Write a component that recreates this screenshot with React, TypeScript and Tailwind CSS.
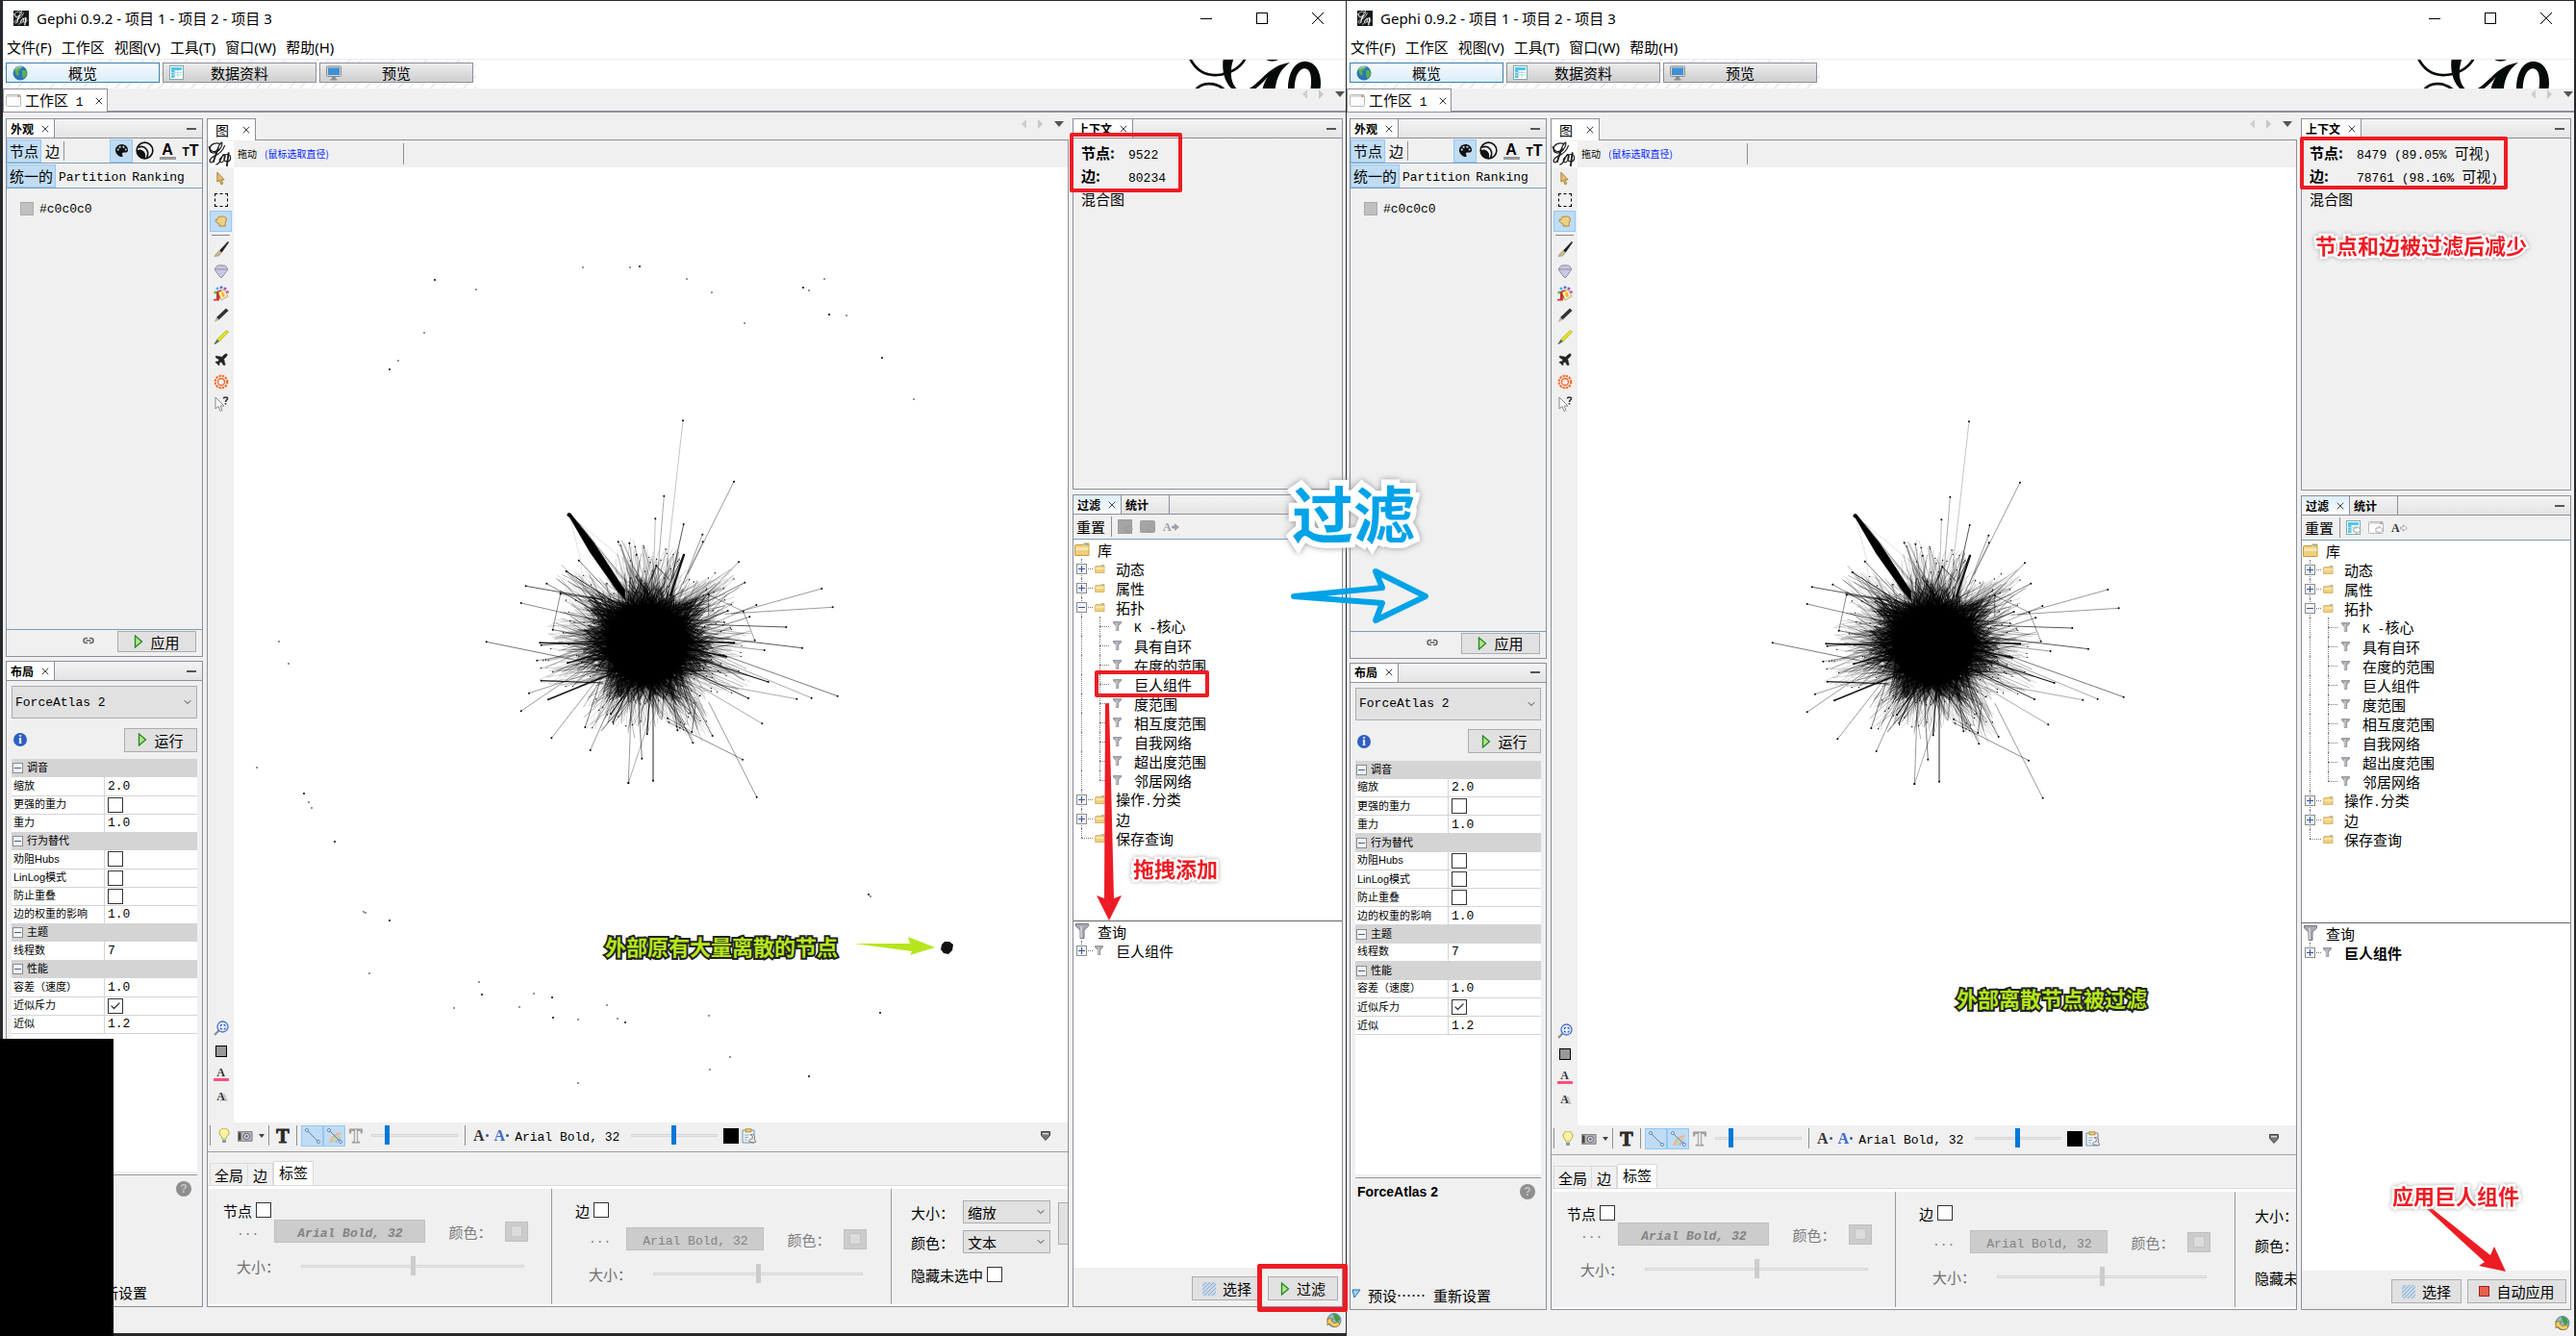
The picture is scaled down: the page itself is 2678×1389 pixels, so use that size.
import React from "react";
import { Check, ChevronDown, Link2, Palette, Plane, Gem, X } from "lucide-react";

const LINE = "border-[#8c8f9a]";

/* ---------- small drawings ---------- */

function GephiMark({ dark = false, className }: { dark?: boolean; className: string }) {
  const ink = dark ? "#ffffff" : "#1c1c1c";
  return (
    <svg viewBox="0 0 26 26" className={className} fill="none" stroke={ink} aria-hidden="true">
      <rect width="26" height="26" fill={dark ? "#15181b" : "#ffffff"} stroke="none" />
      <path d="M13 3C8 0 2 3 2 8c0 4 5 5 9 1 3-3 4-7 3-8-2 0-5 8-6 13-1 4-3 8-5 7-2-1-1-4 3-6 5-2 9-5 11-11" strokeWidth="1.200" />
      <path d="M1 5c1 5 6 7 9 3M8 23c4 1 5-6 7-9 2-2 3 0 2 3-1 4-4 5-5 3s3-7 7-7c5 0 5 7 0 7-4 0-3-4-1-7" strokeWidth="1.200" />
      <path d="M21 11c-1 5-1 9-2 14" strokeWidth="1.800" />
      <path d="M12 7C9 10 6 16 6 21" strokeWidth="1.500" />
    </svg>
  );
}

function BannerLogo() {
  return (
    <svg viewBox="550 186 420 90" className="mr-6 h-[30px] w-[140px]" fill="none" stroke="#050a0a" aria-hidden="true">
      <path d="M557 184C575 218 605 236 640 234C680 232 712 212 728 184" strokeWidth="8" />
      <path d="M660 184C654 225 668 262 690 280L706 280C684 262 678 225 692 184Z" fill="#050a0a" stroke="none" />
      <path d="M574 280C592 258 632 252 664 280" strokeWidth="8" />
      <path d="M790 184Q812 198 836 184Z" fill="#050a0a" stroke="none" />
      <path d="M734 280C780 258 800 204 868 195C840 215 826 240 822 280L782 280C786 262 792 250 798 240C785 256 770 270 756 280Z" fill="#050a0a" stroke="none" />
      <path d="M862 280C862 232 878 193 916 191C954 193 970 236 962 280L932 280C938 240 932 214 914 214C896 214 882 240 882 280Z" fill="#050a0a" stroke="none" />
    </svg>
  );
}

function Globe() {
  return (
    <svg viewBox="0 0 16 16" className="h-4 w-4" aria-hidden="true">
      <circle cx="8" cy="8" r="7.5" fill="#2c74b8" />
      <path d="M2 4c2-2 4-3 6-3l1 3-3 2 1 3-2 2-2-3zM10 5l4 0 1 4-3 5-2-3z" fill="#5bb04f" />
      <path d="M3 4a6 6 0 0 1 7-2" stroke="#bfe3f7" fill="none" />
    </svg>
  );
}

function SheetIcon({ gray = false, arrow = false }: { gray?: boolean; arrow?: boolean }) {
  return (
    <svg viewBox="0 0 16 16" className="h-4 w-4" aria-hidden="true">
      <rect x=".5" y=".5" width="14" height="14" fill={gray ? "#a5a5a5" : "#ffffff"} stroke={gray ? "#9a9a9a" : "#7ea9a9"} />
      {!gray && <path d="M2 2h11v3H2zM2 2h3v11H2z" fill="#4cc6ee" />}
      {!gray && <path d="M2 7.500h11M2 10h11M5.500 5v8M9 5v8" stroke="#b9d9e4" />}
      {arrow && <path d="M8 8h3V6l4.500 4-4.500 4v-2H8z" fill={gray ? "#a5a5a5" : "#fff"} stroke="#8b9a8b" strokeWidth=".8" />}
    </svg>
  );
}

function FrameIcon({ gray = false, arrow = false }: { gray?: boolean; arrow?: boolean }) {
  return (
    <svg viewBox="0 0 16 16" className="h-4 w-4" aria-hidden="true">
      <rect x=".5" y="1.500" width="15" height="12" rx="1" fill={gray ? "#a5a5a5" : "#fdfdfd"} stroke={gray ? "#9e9e9e" : "#b9b9b9"} />
      {!gray && <path d="M1 2h14v2H1z" fill="#dcdcdc" />}
      {!gray && <circle cx="13.500" cy="3" r="1" fill="#d9604c" />}
      {arrow && <path d="M8 8h3V6l4.500 4-4.500 4v-2H8z" fill={gray ? "#a5a5a5" : "#fff"} stroke="#999" strokeWidth=".8" />}
    </svg>
  );
}

function MonitorIcon() {
  return (
    <svg viewBox="0 0 16 16" className="h-4 w-4" aria-hidden="true">
      <rect x=".5" y="1" width="15" height="10.500" rx="1" fill="#d5d5d5" stroke="#8d8d8d" />
      <rect x="2" y="2.500" width="12" height="7.500" fill="#3a92d8" />
      <path d="M6 12h4v2H6zM4.500 14h7v1.500h-7z" fill="#8d8d8d" />
    </svg>
  );
}

function PlayIcon() {
  return (
    <svg viewBox="0 0 10 14" className="h-[14px] w-[10px]" aria-hidden="true">
      <path d="M1.500 1l7 6-7 6z" fill="#b6e28a" stroke="#1f8a1f" strokeWidth="1.300" />
    </svg>
  );
}

function Folder({ big = false }: { big?: boolean }) {
  return (
    <svg viewBox="0 0 16 14" className={big ? "h-[14px] w-4" : "h-[9px] w-[11px]"} aria-hidden="true">
      <path d="M1 2.500L9 2.500 10 1h5v12.500H.5V3z" fill="#f0cf80" stroke="#c79b3b" />
      <path d="M1.500 5h13v3h-13z" fill="#fae6ae" />
      <path d="M11 1.800h3" stroke="#4fb7d8" strokeWidth="1.500" />
    </svg>
  );
}

function Funnel({ big = false }: { big?: boolean }) {
  return (
    <svg viewBox="0 0 14 16" className={big ? "h-4 w-[14px]" : "h-[10px] w-[9px]"} aria-hidden="true">
      <path d="M.5.5h13v2.500l-4.500 4v8.500h-4V7l-4.500-4z" fill="#a9a9b2" stroke="#77777f" />
      <path d="M6 3v12" stroke="#e4e4ec" strokeWidth="1.200" />
    </svg>
  );
}

function SerifA({ color, drop = false }: { color: string; drop?: boolean }) {
  return (
    <span className="flex items-center font-['Liberation_Serif'] text-base font-bold leading-none" style={{ color }}>
      A{drop && <span className="ml-px h-[3px] w-[3px] rounded-full bg-[#3c5a85]" />}
    </span>
  );
}

function HatchSwatch() {
  return (
    <svg viewBox="0 0 14 14" className="h-[14px] w-[14px]" aria-hidden="true">
      <rect width="14" height="14" fill="#c7d8e8" />
      <path d="M0 4l4-4M0 8l8-8M0 12l12-12M2 14L14 2M6 14l8-8M10 14l4-4" stroke="#8fb0d0" />
    </svg>
  );
}

function StatusGlobe() {
  return (
    <svg viewBox="0 0 16 16" className="h-4 w-4" aria-hidden="true">
      <circle cx="8" cy="7.500" r="7" fill="#8fb9c9" stroke="#47707f" strokeWidth=".8" />
      <path d="M7 1c4 0 6 2 7 6l-3 3-3-4z" fill="#3f9c46" />
      <path d="M1 6l6 0-2 2c2 3 5 3 7 1l2 3c-4 4-8 3-11-1l-2 2z" fill="#f1cf67" stroke="#8a641a" strokeWidth=".8" />
    </svg>
  );
}

/* ---------- shared controls ---------- */

function CheckBox({ label, checked = false, disabled = false }: { label: string; checked?: boolean; disabled?: boolean }) {
  return (
    <span className="relative inline-block h-4 w-4 shrink-0">
      <input type="checkbox" aria-label={label} defaultChecked={checked} disabled={disabled} className="peer block h-4 w-4 appearance-none border border-[#333] bg-white" />
      <Check className="pointer-events-none absolute left-0.5 top-0.5 hidden h-3 w-3 text-[#333] peer-checked:block" strokeWidth={2.500} />
    </span>
  );
}

function Slider({ label, value, className, disabled = false }: { label: string; value: number; className: string; disabled?: boolean }) {
  return (
    <input
      type="range"
      aria-label={label}
      defaultValue={value}
      disabled={disabled}
      className={`h-5 shrink-0 appearance-none bg-transparent [&::-webkit-slider-runnable-track]:h-[3px] [&::-webkit-slider-runnable-track]:border [&::-webkit-slider-runnable-track]:border-[#d6d6d6] [&::-webkit-slider-runnable-track]:bg-[#e7eaea] [&::-webkit-slider-thumb]:-mt-[10px] [&::-webkit-slider-thumb]:h-5 [&::-webkit-slider-thumb]:w-[5px] [&::-webkit-slider-thumb]:appearance-none [&::-webkit-slider-thumb]:bg-[#0078d7] disabled:[&::-webkit-slider-thumb]:bg-[#cccccc] ${className}`}
    />
  );
}

function Push({ children, className }: { children: React.ReactNode; className: string }) {
  return <button className={`flex items-center justify-center gap-[7px] border border-[#adadad] bg-[#e1e1e1] leading-none ${className}`}>{children}</button>;
}

function DropDown({ label, value, className }: { label: string; value: string; className: string }) {
  return (
    <span className="relative block">
      <select aria-label={label} defaultValue={value} className={`block appearance-none rounded-none border border-[#adadad] bg-[#e1e1e1] py-0 leading-none ${className}`}>
        <option>{value}</option>
      </select>
      <ChevronDown className="pointer-events-none absolute right-1 top-1/2 h-3 w-3 -translate-y-1/2 text-[#444]" />
    </span>
  );
}

const Rule = ({ className = "h-[21px]" }: { className?: string }) => <span className={`w-px shrink-0 bg-[#8f8f8f] ${className}`} />;

const Mono = ({ children, className = "" }: { children: React.ReactNode; className?: string }) => (
  <span className={`whitespace-pre font-['Liberation_Mono'] text-[13px] leading-none ${className}`}>{children}</span>
);

function ScrollArrows({ className }: { className: string }) {
  return (
    <svg viewBox="0 0 46 12" className={`h-3 w-[46px] ${className}`} aria-hidden="true">
      <path d="M6 1v10L1 6z" fill="#cfcfcf" />
      <path d="M18 1v10l5-5z" fill="#c8c8c8" />
      <path d="M35 3h10l-5 6z" fill="#555" />
    </svg>
  );
}

function PanelHead({ title, active = false, extra }: { title: string; active?: boolean; extra?: string }) {
  return (
    <div className={`flex h-5 shrink-0 items-stretch border-b bg-gradient-to-b from-[#f3f3f3] to-[#e4e4e4] text-xs font-bold leading-none ${LINE}`}>
      <div className={`flex items-center gap-1.5 border-r pl-1 pr-[3px] ${LINE} ${active ? "bg-gradient-to-b from-[#dcecf9] to-white" : "bg-white"}`}>
        {title}
        <button aria-label={`关闭 ${title}`}><X className="h-3 w-3 text-[#444]" /></button>
      </div>
      {extra && <div className={`flex w-[50px] items-center border-r pl-1 ${LINE}`}>{extra}</div>}
      <button aria-label={`最小化 ${title}`} className="ml-auto mr-1.5 flex items-center"><span className="h-0.5 w-[10px] bg-[#555]" /></button>
    </div>
  );
}

/* ---------- left side ---------- */

function Appearance() {
  return (
    <section className={`flex min-h-0 flex-[560_1_0%] flex-col border ${LINE}`}>
      <PanelHead title="外观" />
      <div className="flex h-[26px] shrink-0 items-center border-b border-[#7f9db9]">
        <button className="h-6 w-9 border border-[#90c8f6] bg-[#c0dcf3] leading-none">节点</button>
        <button className="ml-1 leading-none">边</button>
        <Rule className="ml-1 h-5" />
        <div className="ml-auto flex items-center">
          <button aria-label="颜色" className="flex h-6 w-6 items-center justify-center border border-[#90c8f6] bg-[#c0dcf3]">
            <svg viewBox="0 0 16 16" className="h-[15px] w-[15px]" aria-hidden="true">
              <path d="M8 1a7 6.500 0 0 0-7 6.500c0 4 4 7.500 7 7.500 2 0 1-2 .5-3s.5-2 2-2H13c1.500 0 2-1.500 2-2.500C15 4 12 1 8 1z" fill="#111" />
              <g fill="#c0dcf3"><circle cx="4" cy="7" r="1.200" /><circle cx="6" cy="4" r="1.200" /><circle cx="10" cy="4" r="1.200" /><circle cx="12.500" cy="7" r="1.100" /></g>
            </svg>
          </button>
          <button aria-label="大小" className="flex h-6 w-6 items-center justify-center">
            <svg viewBox="0 0 20 20" className="h-[19px] w-[19px]" fill="none" stroke="#111" strokeWidth="1.700"><circle cx="10" cy="10" r="8.800" /><path d="M3 6.500c7-3 13 4 9 11.500" /><path d="M2 10.500c5-2 9 2 7.500 7.500C6 18 2.500 15 2 10.500z" fill="#111" /></svg>
          </button>
          <button aria-label="标签颜色" className="flex h-6 w-6 flex-col items-center justify-center font-['Liberation_Sans'] text-base font-bold leading-[15px]">A<span className="h-[3px] w-[17px] bg-[#999]" /></button>
          <button aria-label="标签大小" className="flex h-6 w-6 items-baseline justify-center font-['Liberation_Sans'] text-xs font-bold leading-6">T<span className="text-base leading-6">T</span></button>
        </div>
      </div>
      <div className="flex h-[26px] shrink-0 items-center border-b border-[#7f9db9]">
        <button className="h-6 w-[51px] border border-[#90c8f6] bg-[#c0dcf3] leading-none">统一的</button>
        <button className="ml-[3px] leading-none"><Mono>Partition</Mono></button>
        <button className="ml-1.5 leading-none"><Mono>Ranking</Mono></button>
      </div>
      <div className="flex items-center gap-1.5 px-3.5 py-3.5"><span className="h-3.5 w-3.5 border border-[#aaa] bg-[#c0c0c0]" /><Mono>#c0c0c0</Mono></div>
      <div className="mt-auto flex h-7 items-start justify-end gap-6 border-t border-[#7f9db9] pr-1.5 pt-px">
        <Link2 className="mt-1 h-3 w-3 text-[#666]" strokeWidth={3} />
        <Push className="h-[22px] w-[82px]"><PlayIcon />应用</Push>
      </div>
    </section>
  );
}

type Prop = { head?: string; name?: string; value?: string; check?: boolean };
const PROPS: Prop[] = [
  { head: "调音" }, { name: "缩放", value: "2.0" }, { name: "更强的重力", check: false }, { name: "重力", value: "1.0" },
  { head: "行为替代" }, { name: "劝阻Hubs", check: false }, { name: "LinLog模式", check: false }, { name: "防止重叠", check: false }, { name: "边的权重的影响", value: "1.0" },
  { head: "主题" }, { name: "线程数", value: "7" },
  { head: "性能" }, { name: "容差（速度）", value: "1.0" }, { name: "近似斥力", check: true }, { name: "近似", value: "1.2" },
];

function LayoutPanel() {
  return (
    <section className={`flex min-h-0 flex-[672_1_0%] flex-col border ${LINE}`}>
      <PanelHead title="布局" />
      <div className="flex min-h-0 flex-1 flex-col px-[5px] pt-[5px]">
        <DropDown label="布局算法" value="ForceAtlas 2" className="h-[34px] w-full pl-[3px] font-['Liberation_Mono'] text-[13px]" />
        <div className="flex h-[42px] shrink-0 items-center justify-between pl-0.5 pt-0.5">
          <button aria-label="信息" className="h-[14px] w-[14px] rounded-full bg-[#2f5fc0] font-['Liberation_Serif'] text-xs font-bold leading-[14px] text-white">i</button>
          <Push className="h-[25px] w-[76px]"><PlayIcon />运行</Push>
        </div>
        <div className="min-h-0 flex-1 bg-white">
          <table className="w-full table-fixed border-collapse font-['Liberation_Sans','Noto_Sans_CJK_SC',sans-serif] text-[11px] leading-none">
            <tbody>
              {PROPS.map((p) =>
                p.head ? (
                  <tr key={p.head} className="h-[19px] bg-[#d4d4d4]">
                    <th colSpan={2} className="p-0 text-left font-normal">
                      <span className="flex items-center gap-1 pl-px">
                        <span className="flex h-[11px] w-[11px] items-center justify-center border border-[#8c8c8c] bg-[#f5f5f5]"><span className="h-px w-[7px] bg-[#3a5fa0]" /></span>
                        {p.head}
                      </span>
                    </th>
                  </tr>
                ) : (
                  <tr key={p.name} className="h-[19px] border-b border-[#d4d4d4]">
                    <td className="whitespace-nowrap border-r border-[#d4d4d4] p-0 pl-0.5">{p.name}</td>
                    <td className="p-0 pl-[3px] align-middle">
                      {p.value ? <Mono className="block">{p.value}</Mono> : <span className="flex"><CheckBox label={p.name ?? ""} checked={p.check} /></span>}
                    </td>
                  </tr>
                )
              )}
            </tbody>
          </table>
        </div>
        <div className="mt-[3px] flex h-[137px] shrink-0 flex-col justify-between border-t border-[#999] pb-1.5 pt-1.5">
          <div className="flex items-start justify-between pl-0.5 pr-1.5">
            <span className="font-['Liberation_Sans'] text-sm font-bold leading-4">ForceAtlas 2</span>
            <button aria-label="帮助" className="h-4 w-4 rounded-full bg-[#8e8e8e] font-['Liberation_Sans'] text-xs font-bold leading-4 text-[#c4c4c4]">?</button>
          </div>
          <div className="-ml-1 flex items-center leading-4">
            <svg viewBox="0 0 10 10" className="mb-1 h-2.5 w-2.5" aria-hidden="true"><path d="M1 1h8L3 9z" fill="#9fd3f3" stroke="#1f6fb2" /></svg>
            <button className="ml-[7px] whitespace-nowrap">预设……</button>
            <button className="ml-2 whitespace-nowrap">重新设置</button>
          </div>
        </div>
      </div>
    </section>
  );
}

/* ---------- graph ---------- */

const SPOKES: [number, number, number, number, number][] = [
  [690, 52, 640, 500, 0.35], [849, 242, 705, 530, 0.6], [631, 287, 612, 520, 0.5], [604, 358, 598, 540, 0.4], [692, 375, 655, 545, 1],
  [751, 407, 690, 560, 0.6], [752, 430, 680, 580, 0.5], [488, 430, 545, 560, 0.6], [523, 434, 540, 560, 0.5], [545, 470, 560, 600, 0.4],
  [864, 493, 700, 660, 0.6], [883, 557, 720, 640, 0.8], [1123, 576, 840, 655, 0.6], [1157, 634, 820, 655, 0.6], [919, 627, 700, 720, 0.5],
  [1012, 696, 760, 688, 1], [1062, 761, 760, 725, 1], [944, 768, 700, 740, 0.6], [1172, 911, 780, 770, 0.8], [1091, 917, 760, 780, 0.5],
  [956, 867, 720, 790, 1.6], [1045, 920, 770, 870, 0.5], [894, 918, 690, 820, 1.2], [937, 997, 740, 880, 0.5], [876, 1109, 640, 990, 0.7],
  [920, 1226, 770, 930, 0.6], [782, 1035, 700, 880, 0.8], [721, 1057, 640, 900, 0.7], [597, 1175, 597, 860, 1.3], [562, 1106, 548, 880, 0.8],
  [520, 1182, 530, 900, 0.6], [520, 1182, 580, 1000, 0.5], [578, 1030, 590, 860, 1.6], [401, 1080, 490, 880, 0.6], [472, 992, 540, 850, 1.4],
  [385, 1008, 430, 870, 0.8], [280, 1042, 430, 850, 0.6], [185, 958, 430, 790, 0.6], [270, 922, 470, 840, 2.2], [210, 902, 430, 830, 0.6],
  [248, 863, 440, 870, 1.6], [235, 800, 430, 770, 0.5], [77, 742, 420, 812, 0.8], [244, 745, 430, 750, 2], [248, 752, 420, 740, 1],
  [185, 621, 440, 680, 0.7], [200, 568, 440, 610, 1], [265, 560, 440, 660, 0.7], [326, 522, 480, 620, 1.2], [365, 488, 490, 620, 0.8],
  [308, 592, 284, 704, 0.7], [284, 704, 420, 730, 0.8], [308, 592, 440, 610, 0.8], [770, 595, 878, 647, 0.6], [878, 647, 914, 737, 0.6],
  [770, 595, 770, 660, 0.6], [914, 737, 780, 760, 0.4], [330, 808, 460, 770, 2], [465, 967, 540, 860, 1.6], [718, 1023, 730, 930, 0.8],
  [642, 980, 718, 1023, 0.6], [693, 470, 650, 600, 3.2], [693, 470, 630, 600, 1], [607, 505, 560, 620, 1], [607, 505, 650, 550, 1],
  [850, 745, 700, 740, 2.4], [825, 788, 690, 760, 2.6], [830, 645, 700, 700, 1.2], [898, 664, 720, 720, 0.7], [673, 1018, 650, 850, 0.9],
];

function makeFuzz() {
  let seed = 9522;
  const rnd = () => {
    seed = (seed * 1664525 + 1013904223) % 4294967296;
    return seed / 4294967296;
  };
  const CX = 578;
  const CY = 746;
  const ray = (minR: number, spread: number, pow: number, swing: number, inBase: number) => {
    const a = rnd() * Math.PI * 2;
    const bias = 0.84 + 0.09 * Math.sin(a * 7) + 0.09 * Math.cos(a * 11 + 1);
    const r = (minR + spread * Math.pow(rnd(), pow)) * bias;
    const b = a + (rnd() - 0.5) * swing;
    const inner = inBase + rnd() * 50;
    const x = Math.round(CX + Math.cos(a) * r * 1.06);
    const y = Math.round(CY + Math.sin(a) * r * 0.98);
    return { x, y, seg: `M${x} ${y}L${Math.round(CX + Math.cos(b) * inner)} ${Math.round(CY + Math.sin(b) * inner)}` };
  };
  let light = "";
  let dense = "";
  let halo = "";
  let nodes = "";
  for (let i = 0; i < 1700; i++) {
    const k = ray(170, 190, 1.5, 1.3, 80);
    if (i % 3 === 0) dense += k.seg;
    else light += k.seg;
    if (i % 7 === 0) nodes += `M${k.x} ${k.y}h.1`;
  }
  for (let i = 0; i < 1300; i++) halo += ray(140, 95, 1.4, 1.6, 70).seg;
  return { light, dense, halo, nodes };
}
const FUZZ = makeFuzz();

const OUTLIERS: [number, number][] = [
  [452, 291], [441, 346], [414, 375], [405, 384], [290, 667], [267, 798], [316, 825], [321, 834], [324, 840], [348, 875], [378, 948], [380, 949],
  [405, 957], [384, 1012], [498, 1021], [501, 1034], [472, 1048], [555, 1033], [574, 1037], [540, 1047], [631, 1045], [575, 1058], [601, 1060],
  [642, 1059], [650, 1063], [601, 1126], [737, 1056], [915, 1053], [759, 1099], [738, 1112], [841, 1119], [606, 278], [655, 278], [665, 277], [714, 290],
  [740, 304], [835, 299], [841, 302], [857, 290], [862, 327], [880, 328], [774, 336], [917, 372], [950, 415], [495, 301], [903, 930], [905, 932], [300, 690],
];

function Graph({ outliers }: { outliers: boolean }) {
  return (
    <svg viewBox="243 176 867 990" className="h-[990px] w-[867px] shrink-0" role="img" aria-label="网络图">
      <g transform="translate(480 420) scale(.33333)" fill="none" stroke="#000">
        <path d={FUZZ.light} strokeWidth="1.200" opacity=".4" />
        <path d={FUZZ.dense} strokeWidth="1.800" opacity=".5" />
        <path d={FUZZ.halo} strokeWidth="2" opacity=".75" />
        <path d={FUZZ.nodes} strokeWidth="4" strokeLinecap="round" />
        {SPOKES.map(([x1, y1, x2, y2, w], i) => (
          <path key={i} d={`M${x1} ${y1}L${x2} ${y2}`} strokeWidth={w < 1 ? 2 : w * 2.2} opacity={w < 1 ? w : 0.9} />
        ))}
        {SPOKES.map(([x, y], i) => <circle key={i} cx={x} cy={y} r="3" fill="#000" stroke="none" />)}
        <path d="M332 345L400 462 480 575 510 610 508 580 410 430 340 343Z" fill="#000" stroke="#000" strokeWidth="2" />
        <path d="M335 345L500 545M335 345L470 520M335 345L520 560M365 370L540 590" strokeWidth="2" opacity=".45" />
        <path d="M335 345L370 480 380 575M335 345L545 520" strokeWidth="1.500" opacity=".25" />
        <circle cx="335" cy="346" r="6" fill="#000" />
        <ellipse cx="578" cy="746" rx="126" ry="124" fill="#000" />
      </g>
      {outliers && (
        <g fill="#111">
          {OUTLIERS.map(([x, y], i) => <circle key={i} cx={x} cy={y} r={i % 3 ? 0.8 : 1.1} />)}
          <path d="M979 982l3-3 5 0 4 3-1 6-4 4-5-1-3-4z" />
          <path d="M888 981L946 981 944 974 972 985 946 993 948 989Z" fill="#b5e61d" />
        </g>
      )}
    </svg>
  );
}

/* ---------- centre ---------- */

const TOOLS: [string, React.ReactNode][] = [
  ["画笔", <svg viewBox="0 0 16 16" className="h-4 w-4"><path d="M15 .5L6.500 9.500 8.500 11 15.500 1z" fill="#222" stroke="#222" /><path d="M6 9.500l2.500 2-3 3.500-4.500.5 2-3z" fill="#c9b98c" stroke="#8d8362" strokeWidth=".6" /></svg>],
  ["调整大小", <Gem className="h-4 w-4" fill="#c9c9e2" stroke="#8c8ca4" strokeWidth={1.500} />],
  ["填充", <svg viewBox="0 0 16 16" className="h-4 w-4"><circle cx="4" cy="3" r="1.500" fill="#3fb8d8" /><circle cx="8" cy="1.800" r="1.500" fill="#5b6ee0" /><circle cx="12" cy="3" r="1.500" fill="#a052d0" /><circle cx="14.500" cy="6.500" r="1.500" fill="#d05aa0" /><circle cx="1.800" cy="7" r="1.500" fill="#57c04f" /><path d="M3 6l5-2 1 8-6 3z" fill="#c9352b" /><path d="M5 7l6-3 4 7-7 4z" fill="#fff3d0" stroke="#a0864a" strokeWidth=".7" /><path d="M10 6l2 5-3 1-1-5z" fill="#f2b51c" /><path d="M0 14h6v1.500H0z" fill="#d52b2b" /></svg>],
  ["铅笔", <svg viewBox="0 0 16 16" className="h-4 w-4"><path d="M13 .5l2.500 2.500L5.500 12.500 3 10z" fill="#333" /><path d="M3 10l2.500 2.500L.8 15z" fill="#c9ab83" /></svg>],
  ["荧光笔", <svg viewBox="0 0 16 16" className="h-4 w-4"><path d="M13.500.5L15.500 2 6 12l-2.500-2z" fill="#e9e51c" stroke="#a5a014" strokeWidth=".7" /><path d="M3.500 10L6 12l-4.500 3-1-.5z" fill="#566" /></svg>],
  ["最短路径", <Plane className="h-4 w-4" fill="#222" stroke="#222" strokeWidth={1} />],
  ["热图", <svg viewBox="0 0 16 16" className="h-4 w-4" fill="none" stroke="#f5701f"><circle cx="8" cy="8" r="6.300" strokeWidth="2.200" strokeDasharray="2.300 1" /><circle cx="8" cy="8" r="3.500" strokeWidth="1.300" stroke="#f2603a" /></svg>],
  ["编辑", <svg viewBox="0 0 16 16" className="h-4 w-4"><path d="M2 1v12l3-2.500 2 5 2-1-2-4.500h4z" fill="#fff" stroke="#888" /><path d="M10.500 2.500c0-2 4-2 4 0 0 1.500-2 1.500-2 3.500M12.500 7v1.500" stroke="#333" strokeWidth="1.600" fill="none" /></svg>],
];

function ToolColumn() {
  return (
    <div className="flex w-[27px] shrink-0 flex-col items-center">
      <button aria-label="选择" className="flex h-[23px] w-[23px] items-center justify-center"><svg viewBox="0 0 10 16" className="h-[15px] w-[9px]"><path d="M1 1v11l2.500-2L5.500 15l2-1L5.500 9.500H9z" fill="#e6c46e" stroke="#8f6c1d" strokeWidth=".9" /></svg></button>
      <button aria-label="矩形选择" className="flex h-[22px] w-[23px] items-center justify-center"><span className="h-[14px] w-[14px] border border-dashed border-black" /></button>
      <button aria-label="拖动" className="flex h-[22px] w-[23px] items-center justify-center border border-[#90c8f6] bg-[#c0dcf3]"><svg viewBox="0 0 14 13" className="h-3 w-[14px]"><path d="M3 3q1-3 2.500-1Q7 0 8.500 1.500 10 0 11 2q2 0 2 2.500L11.500 9v3H5V10L.8 7V4.500L2.500 5z" fill="#eed083" stroke="#a17a26" strokeWidth=".9" /></svg></button>
      <span className="mb-0.5 mt-[3px] h-px w-[19px] bg-[#888]" />
      {TOOLS.map(([name, icon]) => <button key={name} aria-label={name} className="flex h-[23px] w-[23px] items-center justify-center">{icon}</button>)}
      <div className="mt-auto flex flex-col items-center pb-4">
        <button aria-label="居中" className="flex h-6 w-[23px] items-center justify-center"><svg viewBox="0 0 16 16" className="h-4 w-4" fill="none"><path d="M6 10L1 15" stroke="#888" strokeWidth="2" /><circle cx="9.500" cy="6.500" r="5.500" fill="#e6efff" stroke="#4a6fd0" strokeWidth="1.300" /><path d="M7.500 6V4.500H9M10.500 4.500H12V6M12 7.500V9h-1.500M9 9H7.500V7.500" stroke="#2547b5" /></svg></button>
        <button aria-label="重置颜色" className="flex h-6 w-[23px] items-center justify-center"><span className="h-3 w-3 border border-black bg-[#999]" /></button>
        <button aria-label="重置标签颜色" className="flex h-6 w-[23px] flex-col items-center justify-center font-['Liberation_Serif'] text-xs font-bold leading-[11px] text-[#333]">A<span className="h-[3px] w-4 bg-[#ff4f7d]" /></button>
        <button aria-label="重置标签大小" className="flex h-[22px] w-[23px] items-center justify-center font-['Liberation_Serif'] text-xs font-bold leading-none text-[#333] [text-shadow:3px_1px_0_#c4c4c4]">A</button>
      </div>
    </div>
  );
}

function LightEdge({ rainbow = false }: { rainbow?: boolean }) {
  return (
    <svg viewBox="0 0 16 16" className="h-4 w-4" fill="none">
      {rainbow && <path d="M3 15C5 9 9 6 14 5" stroke="#f0b090" strokeWidth="2" />}
      {rainbow && <path d="M6 15c1-4 4-6 8-7" stroke="#b9dc94" strokeWidth="2" />}
      {rainbow && <path d="M9 15c1-2 3-4 5-4" stroke="#c9a4de" strokeWidth="2" />}
      <path d="M2 2l12 12" stroke="#5a86b0" />
      <circle cx="2" cy="2" r="1.500" fill="#fff" stroke="#5a86b0" />
      <circle cx="14" cy="14" r="1.500" fill="#fff" stroke="#5a86b0" />
    </svg>
  );
}

function BottomBar() {
  return (
    <div className="flex h-[31px] shrink-0 items-center overflow-hidden border-b border-[#a0a0a0] pb-[3px] pl-0.5">
      <Rule />
      <button aria-label="背景色" className="ml-1.5 w-4"><svg viewBox="0 0 12 16" className="mx-auto h-4 w-3"><path d="M4 11C4 8 1 8 1 5a5 5 0 0 1 10 0c0 3-3 3-3 6z" fill="#fbf3a0" stroke="#b9a94c" /><path d="M4 12h4v3H4z" fill="#999" /></svg></button>
      <button aria-label="截图" className="ml-1.5"><svg viewBox="0 0 18 16" className="h-4 w-4"><path d="M0 3h17v11H0z" fill="#b5b5b5" stroke="#777" /><path d="M1 4h3v9H1z" fill="#444" /><circle cx="10.500" cy="8.500" r="3.600" fill="#dcdcec" stroke="#555" /><circle cx="10.500" cy="8.500" r="1.500" fill="#5868a8" /></svg></button>
      <svg viewBox="0 0 6 4" className="ml-1.5 h-1 w-1.5"><path d="M0 0h6L3 4z" fill="#345" /></svg>
      <Rule className="ml-1 h-[21px]" />
      <button aria-label="显示标签" className="ml-1.5 w-4 font-['Liberation_Serif'] text-xl font-bold leading-none text-[#2b2b2b] [-webkit-text-stroke:1px_#2b2b2b]">T</button>
      <Rule className="ml-1.5 h-[21px]" />
      <button aria-label="显示边" className="ml-1 flex h-[22px] w-[23px] items-center justify-center border border-[#90c8f6] bg-[#c0dcf3]"><LightEdge /></button>
      <button aria-label="边使用节点颜色" className="flex h-[22px] w-[23px] items-center justify-center border border-[#90c8f6] bg-[#c0dcf3]"><LightEdge rainbow /></button>
      <button aria-label="显示边标签" className="ml-[3px] w-4 font-['Liberation_Serif'] text-xl font-bold leading-none text-[#f2f2f2] [-webkit-text-stroke:1px_#999]">T</button>
      <Slider label="边粗细" value={16} className="ml-2 w-[90px]" />
      <Rule className="ml-[7px] h-[21px]" />
      <button aria-label="大小模式" className="ml-2"><SerifA color="#333" drop /></button>
      <button aria-label="颜色模式" className="ml-1.5"><SerifA color="#4169c8" drop /></button>
      <button className="ml-1.5 leading-none"><Mono>Arial Bold, 32</Mono></button>
      <Slider label="标签大小" value={49} className="ml-3 w-[90px]" />
      <button aria-label="标签颜色" className="ml-1.5 h-4 w-4 bg-black" />
      <button aria-label="标签属性" className="ml-[3px]"><svg viewBox="0 0 16 16" className="h-4 w-4"><path d="M1 2h12v13H1z" fill="#eef3f8" stroke="#6f8faf" /><path d="M4 .8h6v3H4z" fill="#f1d28a" stroke="#b58a2f" /><path d="M3 7h5M3 9.500h4M3 12h3" stroke="#9ab" /><path d="M8 14c-1-2 1-3 3-3 1-2 0-4-2-4 3-2 6 2 4 4l2 3-2 1z" fill="#e8e8e8" stroke="#667" strokeWidth=".8" /></svg></button>
      <button aria-label="展开" className="ml-auto mr-[18px]"><svg viewBox="0 0 10 10" className="h-2.5 w-2.5"><path d="M.5.5h9v4L5 9.500.5 4.500z" fill="#777" stroke="#444" /><path d="M2 2.800h6" stroke="#fff" /></svg></button>
    </div>
  );
}

function LabelGroup({ name, italic, gap }: { name: string; italic?: boolean; gap: string }) {
  return (
    <div className={`flex shrink-0 flex-col border-r border-[#999] pt-3.5 ${italic ? "w-[358px] pl-4" : "w-[353px] pl-6"}`}>
      <label className="flex items-center gap-1 leading-none">{name}<CheckBox label={name} /></label>
      <div className={`flex items-center pl-3.5 text-[#7d7d7d] ${gap}`}>
        <Mono>...</Mono>
        <button disabled className={`ml-4 h-6 border border-[#bfbfbf] bg-[#cccccc] leading-none text-[#838383] ${italic ? "w-[157px] font-bold italic" : "w-[143px]"}`}><Mono>Arial Bold, 32</Mono></button>
        <span className="ml-6 w-[59px] leading-none">颜色：</span>
        <button disabled aria-label={`${name}颜色`} className="flex h-[21px] w-6 items-center justify-center border border-[#bfbfbf] bg-[#cccccc]"><span className="h-3 w-3 border border-[#c4c4c4] bg-[#dcdcdc]" /></button>
      </div>
      <div className="flex items-center pl-3.5 pt-3.5 leading-none text-[#6d6d6d]">
        <span className="w-[67px]">大小：</span>
        <Slider label={`${name}大小`} value={50} disabled className={italic ? "w-[232px]" : "w-[218px]"} />
      </div>
    </div>
  );
}

function Settings() {
  return (
    <div className="flex h-[160px] shrink-0 flex-col overflow-hidden">
      <div className="flex h-[35px] shrink-0 items-end border-b border-[#dcdcdc] pl-0.5 leading-none">
        <button className="h-[23px] w-10 border border-b-0 border-[#d9d9d9]">全局</button>
        <button className="h-[23px] w-[26px] border border-b-0 border-l-0 border-[#d9d9d9]">边</button>
        <button className="h-[25px] w-[42px] border border-b-0 border-[#d9d9d9] bg-white pb-1">标签</button>
      </div>
      <div className="flex min-h-0 flex-1 border-b-2 border-t-[3px] border-white">
        <LabelGroup name="节点" italic gap="pt-0.5" />
        <LabelGroup name="边" gap="pt-2.5" />
        <div className="flex shrink-0 flex-col pl-5 pt-3 leading-none">
          <label className="flex h-6 items-center"><span className="w-[54px]">大小：</span><DropDown label="大小" value="缩放" className="h-6 w-[91px] pl-1" /></label>
          <label className="mt-[7px] flex h-6 items-center"><span className="w-[54px]">颜色：</span><DropDown label="颜色" value="文本" className="h-6 w-[91px] pl-1" /></label>
          <label className="mt-3.5 flex items-center gap-1">隐藏未选中<CheckBox label="隐藏未选中" /></label>
        </div>
        <button aria-label="更多" className="ml-2 mt-3.5 h-11 w-16 shrink-0 border border-[#adadad] bg-[#e1e1e1]" />
      </div>
    </div>
  );
}

const GREEN = "whitespace-nowrap text-[22px] font-bold leading-none text-[#b5e61d] [-webkit-text-stroke:4px_#222] [paint-order:stroke_fill]";
const RED = "whitespace-nowrap text-[22px] font-bold leading-none text-[#ed1c24] [-webkit-text-stroke:5px_#fff] [paint-order:stroke_fill] drop-shadow-[0_0_2px_#aaa]";

function Centre({ filtered }: { filtered: boolean }) {
  return (
    <section className="flex min-w-0 flex-1 flex-col">
      <div className="flex h-[23px] shrink-0">
        <div className={`flex w-[51px] items-center justify-between border border-b-0 bg-white pl-2 pr-[3px] text-sm leading-none ${LINE}`}>
          图<button aria-label="关闭 图"><X className="h-3 w-3 text-[#444]" /></button>
        </div>
        <div className={`flex flex-1 justify-end border-b ${LINE}`}><ScrollArrows className="mr-1" /></div>
      </div>
      <div className={`flex min-h-0 flex-1 flex-col border border-t-0 ${LINE}`}>
        <div className="flex h-7 shrink-0 items-center text-[10px] leading-none">
          <GephiMark className="h-[27px] w-[27px]" />
          <span className="ml-1">拖动</span>
          <span className="ml-2 whitespace-nowrap text-[#0026ff]">(鼠标选取直径)</span>
          <Rule className="ml-[77px] h-[22px]" />
        </div>
        <div className="flex min-h-0 flex-1">
          <ToolColumn />
          <div className="relative flex min-w-0 flex-1 items-center justify-center overflow-hidden bg-white">
            <Graph outliers={!filtered} />
            {filtered
              ? <p className={`absolute bottom-[122px] right-[155px] ${GREEN}`}>外部离散节点被过滤</p>
              : <p className={`absolute bottom-[173px] right-[239px] ${GREEN}`}>外部原有大量离散的节点</p>}
          </div>
        </div>
        <BottomBar />
        <Settings />
      </div>
    </section>
  );
}

/* ---------- right side ---------- */

function Context({ filtered }: { filtered: boolean }) {
  return (
    <section className={`flex min-h-0 flex-[385_1_0%] flex-col border ${LINE}`}>
      <PanelHead title="上下文" />
      <div className="relative px-2 pt-[3px] leading-6">
        <dl className="grid grid-cols-[49px_1fr]">
          <dt className="font-bold">节点:</dt>
          <dd>{filtered ? <><Mono>8479 (89.05% </Mono>可视<Mono>)</Mono></> : <Mono>9522</Mono>}</dd>
          <dt className="font-bold">边:</dt>
          <dd>{filtered ? <><Mono>78761 (98.16% </Mono>可视<Mono>)</Mono></> : <Mono>80234</Mono>}</dd>
        </dl>
        <p>混合图</p>
        {filtered
          ? <span className="absolute -left-0.5 -top-0.5 h-[55px] w-[216px] rounded-xs border-4 border-[#ed1c24]" />
          : <span className="absolute -left-1 -top-1.5 h-[62px] w-[117px] rounded-xs border-4 border-[#ed1c24]" />}
      </div>
      {filtered && <p className={`mt-6 pl-3.5 ${RED}`}>节点和边被过滤后减少</p>}
    </section>
  );
}

type Node = { label: string; mono?: string; rest?: string; depth: 1 | 2; box?: "+" | "-"; last?: boolean; marked?: boolean; bold?: boolean; funnel?: boolean };
const TREE: Node[] = [
  { label: "动态", depth: 1, box: "+" }, { label: "属性", depth: 1, box: "+" }, { label: "拓扑", depth: 1, box: "-" },
  { label: "", mono: "K -", rest: "核心", depth: 2 }, { label: "具有自环", depth: 2 }, { label: "在度的范围", depth: 2 }, { label: "巨人组件", depth: 2, marked: true },
  { label: "度范围", depth: 2 }, { label: "相互度范围", depth: 2 }, { label: "自我网络", depth: 2 }, { label: "超出度范围", depth: 2 }, { label: "邻居网络", depth: 2, last: true },
  { label: "操作", mono: ".", rest: "分类", depth: 1, box: "+" }, { label: "边", depth: 1, box: "+" }, { label: "保存查询", depth: 1, last: true },
];

function TreeRow({ node, mark }: { node: Node; mark: boolean }) {
  const two = node.depth === 2;
  return (
    <li className="relative flex h-5 items-center leading-none">
      <span className="relative h-5 w-[17px] shrink-0">
        <span className={`absolute left-2 top-0 border-l border-dotted border-[#777] ${node.last && !two ? "h-1/2" : "h-full"}`} />
        {!two && <span className="absolute left-2 top-1/2 w-3 border-t border-dotted border-[#777]" />}
        {node.box && (
          <span className="absolute left-[3px] top-[5px] flex h-[11px] w-[11px] items-center justify-center border border-[#8c8c8c] bg-[#f5f5f5]">
            <span className="absolute h-px w-[7px] bg-[#2f55a0]" />
            {node.box === "+" && <span className="absolute h-[7px] w-px bg-[#2f55a0]" />}
          </span>
        )}
      </span>
      {two ? (
        <span className="relative h-5 w-6 shrink-0">
          <span className={`absolute left-2.5 top-0 border-l border-dotted border-[#777] ${node.last ? "h-1/2" : "h-full"}`} />
          <span className="absolute left-2.5 top-1/2 w-2.5 border-t border-dotted border-[#777]" />
        </span>
      ) : (
        <span className="w-[5px] shrink-0" />
      )}
      <span className="flex w-[22px] shrink-0 items-center">{two || node.funnel ? <Funnel /> : <Folder />}</span>
      <span className={`whitespace-nowrap ${node.bold ? "font-bold" : ""}`}>{node.label}{node.mono && <Mono>{node.mono}</Mono>}{node.rest}</span>
      {mark && <span className="absolute -top-1 left-[22px] h-7 w-[119px] rounded-xs border-4 border-[#ed1c24]" />}
    </li>
  );
}

function Filters({ filtered }: { filtered: boolean }) {
  return (
    <section className={`flex min-h-0 flex-[845_1_0%] flex-col border ${LINE}`}>
      <PanelHead title="过滤" extra="统计" active />
      <div className="flex h-[26px] shrink-0 items-center border-b border-[#7f9db9] pl-[3px] leading-none">
        <button>重置</button>
        <Rule className="ml-1.5 h-[21px]" />
        <button aria-label="导出到表格" className="ml-1.5"><SheetIcon gray={!filtered} arrow /></button>
        <button aria-label="导出到工作区" className="ml-[7px]"><FrameIcon gray={!filtered} arrow /></button>
        <button aria-label="导出列" className="ml-2 flex items-center">
          <span className={`font-['Liberation_Serif'] text-xs font-bold ${filtered ? "text-[#333]" : "text-[#a0a0a0]"}`}>A</span>
          <svg viewBox="0 0 8 8" className="h-2 w-2"><path d="M.5 3h3V.8L7.500 4 3.500 7.200V5h-3z" fill={filtered ? "#fff" : "#a0a0a0"} stroke="#999" strokeWidth=".8" /></svg>
        </button>
      </div>
      <div className="relative min-h-0 flex-[396_1_0%] bg-white">
        <p className="flex h-5 items-center gap-2 pl-px leading-none"><Folder big />库</p>
        <ul>{TREE.map((n, i) => <TreeRow key={i} node={n} mark={!filtered && !!n.marked} />)}</ul>
        {!filtered && (
          <>
            <svg viewBox="0 0 26 226" className="absolute bottom-0 left-6 h-[226px] w-[26px]" aria-hidden="true">
              <path d="M9 1Q11-1 13 1L18 203 26 200 13 226 0 200 8 203Z" fill="#ed1c24" />
            </svg>
            <p className={`absolute bottom-11 left-[62px] ${RED}`}>拖拽添加</p>
          </>
        )}
      </div>
      <div className="min-h-0 flex-[360_1_0%] border-t border-[#666] bg-white">
        <p className="flex h-5 items-center gap-[9px] pl-0.5 leading-none"><Funnel big />查询</p>
        <ul><TreeRow node={{ label: "巨人组件", depth: 1, box: "+", last: true, funnel: true, bold: filtered }} mark={false} /></ul>
      </div>
      <div className="relative flex h-10 shrink-0 items-start justify-end gap-1.5 pr-1 pt-[9px]">
        <Push className="h-[25px] w-[73px]"><HatchSwatch />选择</Push>
        {filtered
          ? <Push className="h-[25px] w-[103px]"><span className="h-[11px] w-[11px] border border-[#a31f17] bg-[#e8614f]" />自动应用</Push>
          : <Push className="h-[25px] w-[73px]"><PlayIcon />过滤</Push>}
        {filtered ? (
          <div className="absolute bottom-[38px] right-[53px]">
            <p className={RED}>应用巨人组件</p>
            <svg viewBox="0 0 88 70" className="ml-8 h-[70px] w-[88px]" aria-hidden="true">
              <path d="M1 1L5 0 70 52 74 43 86 69 58 63 64 59Z" fill="#ed1c24" />
            </svg>
          </div>
        ) : (
          <span className="absolute -right-[6px] -top-1 h-[50px] w-[94px] rounded-xs border-[5px] border-[#ed1c24]" />
        )}
      </div>
    </section>
  );
}

/* ---------- window ---------- */

const MENUS = ["文件(F)", "工作区", "视图(V)", "工具(T)", "窗口(W)", "帮助(H)"];

function ModeButton({ icon, label, active = false }: { icon: React.ReactNode; label: string; active?: boolean }) {
  return (
    <button className={`flex h-[21px] w-40 items-center border pl-1.5 pr-[22px] leading-none ${active ? "border-[#3c7fb1] bg-gradient-to-b from-[#f4fafd] to-[#dceef8]" : "border-[#8c8f9a] bg-gradient-to-b from-[#ececec] to-[#cfcfcf]"}`}>
      {icon}<span className="flex-1">{label}</span>
    </button>
  );
}

function GephiWindow({ filtered, className }: { filtered: boolean; className: string }) {
  return (
    <main className={`flex min-h-0 min-w-0 flex-col bg-[#26282b] ${className}`}>
      <div className="flex min-h-0 flex-1 flex-col bg-[#f0f0f0]">
        <header className="shrink-0 bg-white">
          <div className="flex h-9 items-center pl-[11px] pr-[23px] font-['Noto_Sans','Noto_Sans_CJK_SC',sans-serif] text-[15px]">
            <GephiMark dark className="h-4 w-4" />
            <h1 className="ml-2 whitespace-pre">Gephi 0.9.2 - 项目 1 - 项目 2 - 项目 3</h1>
            <div className="ml-auto flex items-center gap-[46px]">
              <button aria-label="最小化" className="h-px w-3 bg-black" />
              <button aria-label="最大化" className="h-3 w-3 border border-black" />
              <button aria-label="关闭"><svg viewBox="0 0 12 12" className="h-3 w-3"><path d="M0 0l12 12M12 0L0 12" stroke="#000" /></svg></button>
            </div>
          </div>
          <nav className="flex h-6 items-center gap-2.5 pl-1 font-['Noto_Sans','Noto_Sans_CJK_SC',sans-serif] leading-none">
            {MENUS.map((m) => <button key={m}>{m}</button>)}
          </nav>
          <div className="flex h-[31px] items-start justify-between border-t border-[#ececec]">
            <div className="flex gap-[3px] bg-[repeating-linear-gradient(135deg,transparent_0_7px,#e6e6e6_7px_8px)] px-[3px] pb-1.5 pt-[3px]">
              <ModeButton icon={<Globe />} label="概览" active />
              <ModeButton icon={<SheetIcon />} label="数据资料" />
              <ModeButton icon={<MonitorIcon />} label="预览" />
            </div>
            <BannerLogo />
          </div>
        </header>
        <div className={`flex h-[25px] shrink-0 items-start justify-between border-b-2 ${LINE}`}>
          <div className={`flex h-6 w-[109px] items-center border border-b-0 bg-white pl-0.5 leading-none ${LINE}`}>
            <FrameIcon /><span className="ml-1 flex-1 whitespace-nowrap">工作区<Mono> 1</Mono></span>
            <button aria-label="关闭 工作区 1" className="mr-0.5"><X className="h-3 w-3 text-[#333]" /></button>
          </div>
          <ScrollArrows className="" />
        </div>
        <div className="flex min-h-0 flex-1 gap-1 px-[3px] pt-1.5">
          <aside className="flex w-[205px] shrink-0 flex-col gap-1"><Appearance /><LayoutPanel /></aside>
          <Centre filtered={filtered} />
          <aside className="flex w-[281px] shrink-0 flex-col gap-[5px]"><Context filtered={filtered} /><Filters filtered={filtered} /></aside>
        </div>
        <footer className="flex h-[27px] shrink-0 items-center justify-end pr-1"><StatusGlobe /></footer>
      </div>
    </main>
  );
}

export default function App() {
  return (
    <div className="relative grid h-screen grid-cols-[1399fr_1279fr] grid-rows-1 overflow-hidden font-['Noto_Sans_CJK_SC',sans-serif] text-[15px] text-black">
      <GephiWindow filtered={false} className="pb-[3px] pl-[3px] pt-px" />
      <GephiWindow filtered className="pl-px pr-0.5 pt-px" />
      <div className="absolute bottom-0 left-0 h-[309px] w-[118px] bg-black" />
      <div className="absolute left-[52.8%] top-[499px] flex -translate-x-1/2 flex-col items-center">
        <p className="ml-[-14px] text-[64px] font-bold leading-none text-[#00a2e8] [-webkit-text-stroke:12px_#fff] [paint-order:stroke_fill] drop-shadow-[0_0_3px_#999]">过滤</p>
        <svg viewBox="0 0 144 60" className="mt-[26px] h-[60px] w-36" fill="none" stroke="#00a2e8" strokeWidth="6" strokeLinejoin="round" aria-hidden="true">
          <path d="M3 31L95 22 88 5 140 31 88 56 95 38Z" />
        </svg>
      </div>
    </div>
  );
}
